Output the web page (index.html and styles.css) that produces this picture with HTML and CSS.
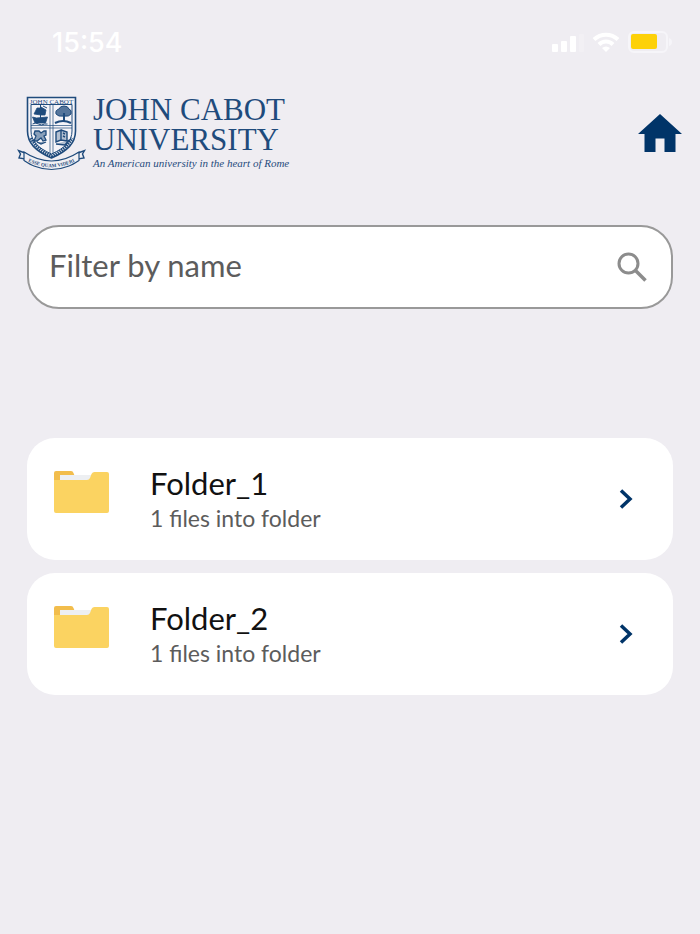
FILE: index.html
```html
<!DOCTYPE html>
<html lang="en">
<head>
  <meta charset="UTF-8">
  <title>Folders - John Cabot University</title>
  <meta name="viewport" content="width=device-width, initial-scale=1.0">
  <link rel="stylesheet" href="styles.css">
</head>
<body>
  <div class="status-bar">
    <span class="clock">15:54</span>
    <div class="status-icons">
      <svg width="32" height="20" viewBox="0 0 32 20" fill="#fff" aria-hidden="true">
        <rect x="0" y="12" width="6" height="8" rx="1"/>
        <rect x="9" y="9" width="6" height="11" rx="1"/>
        <rect x="18" y="4" width="6" height="16" rx="1"/>
        <rect x="27" y="2" width="5" height="18" rx="1" opacity="0.2"/>
      </svg>
      <svg width="28" height="20" viewBox="0 0 28 20" fill="none" stroke="#fff" stroke-width="4" aria-hidden="true">
        <path d="M2 7.5C9 1 19 1 26 7.5"/>
        <path d="M7 12.5C11 8.500 17 8.500 21 12.5"/>
        <path d="M14 20l-4-4c2.5-2 5.5-2 8 0z" fill="#fff" stroke="none"/>
      </svg>
      <svg width="44" height="22" viewBox="0 0 44 22" aria-hidden="true">
        <rect x="1" y="1" width="38" height="20" rx="5" fill="none" stroke="#f6f5f9" stroke-width="2"/>
        <rect x="3" y="3" width="26" height="15" rx="2" fill="#fdd108"/>
        <path d="M41 7q3 1 3 4t-3 4z" fill="#f6f5f9"/>
      </svg>
    </div>
  </div>

  <header class="header">
    <div class="logo">
      <svg class="crest" width="70" height="76" viewBox="0 0 70 76" fill="none" stroke="#1f4b7c" aria-hidden="true">
        <path d="M10.5 2.5h48V36c0 12-8 20-24 27C18.5 56 10.5 48 10.5 36z" fill="#f5f4f8" stroke-width="1.6"/>
        <path d="M14 9.5h41V36c0 10-7 17-20.5 23C21 53 14 46 14 36z"/>
        <text x="34.5" y="8.5" font-family="Liberation Serif, serif" font-size="7" text-anchor="middle" fill="#1f4b7c" stroke="none">JOHN CABOT</text>
        <path d="M33 10v48M36 10v48M14 30.5h41M14 33h41" stroke-width="0.7"/>
        <!-- ship -->
        <path d="M15.500 22l4 1 11-1-2 6H18zM17 19l3-6h4v7zM24 12l5 3-1 5h-4z" fill="#1f4b7c" stroke-width="0.800"/>
        <path d="M23.5 10v13M26 11l4 2M15.500 29q3-2 6 0t6 0h3" stroke-width="1"/>
        <!-- tree -->
        <path d="M39 19q-1-4 3-5 1-3 5-3t5 3q3 1 2 5-2 3-7 2-6 1-8-2z" fill="#1f4b7c" fill-opacity="0.75" stroke-width="1"/>
        <path d="M47 18v8" stroke-width="2"/>
        <path d="M38 28q8-4 16 0" stroke-width="2"/>
        <!-- lion and book -->
        <path d="M18 36h4l2 2 3-2h2v4l-2 1 2 4-3 1-2-3-4 3h-3l2-5-2-2zM20 47l4 2 5-2" fill="#1f4b7c" fill-opacity="0.500" stroke-width="1.300"/>
        <path d="M39 37l5-2v10l-5 2zM44 35l6 2v9l-6-1M46 38l2 1M46 41l2 1M39 49l9 1 4-5" fill="#1f4b7c" fill-opacity="0.300" stroke-width="1.400"/>
        <path d="M14 43Q20 55 34.5 61Q49 55 55 43" stroke-width="3" stroke-dasharray="1.500 0.800"/>
        <!-- ribbon -->
        <path d="M8 58L1.500 55.500l2 3.500-1.500 4 6 1zM61 58l6.500-2.500-2 3.500 1.500 4-6 1z" fill="#f0eff3" stroke-width="1.400"/>
        <path d="M7 57Q34.500 75 62 57V65.500Q55 70 52 71Q34.500 78 17 71Q14 70 7 65.500z" fill="#f0eff3" stroke-width="1.200"/>
        <path id="motto" d="M9 65.5Q34.5 79 60 65.5" stroke="none"/>
        <text font-family="Liberation Serif, serif" font-size="5" font-weight="bold" fill="#1f4b7c" stroke="none"><textPath href="#motto" startOffset="50%" text-anchor="middle">ESSE QUAM VIDERI</textPath></text>
      </svg>
      <div class="logo-text">
        <span class="logo-name">JOHN CABOT<br>UNIVERSITY</span>
        <span class="logo-tagline">An American university in the heart of Rome</span>
      </div>
    </div>
    <a class="home" href="#" aria-label="Home">
      <svg width="44" height="38" viewBox="0 0 44 38" fill="#003468" aria-hidden="true">
        <path d="M22 0L44 20H37.5V38H26.5V24.5H17.5V38H6.5V20H0z"/>
      </svg>
    </a>
  </header>

  <main class="content">
    <form class="search">
      <input class="search-input" type="text" placeholder="Filter by name" aria-label="Filter by name">
      <button class="search-button" type="button" aria-label="Search">
        <svg width="30" height="30" viewBox="0 0 30 30" fill="none" stroke="#8c8c8c" stroke-width="3" aria-hidden="true">
          <circle cx="11.5" cy="11.5" r="9.5"/>
          <path d="M18 18l10.5 10.5" stroke-width="3.5"/>
        </svg>
      </button>
    </form>

    <nav class="folders">
      <a class="folder" href="#">
        <svg class="folder-icon" width="56" height="44" viewBox="0 0 56 44" aria-hidden="true">
          <path d="M0 12V3q0-2 2-2h15q2 0 2.5 2l2 5V14H0z" fill="#f2bd4c"/>
          <path d="M6 5h32v8H6z" fill="#edeff2"/>
          <path d="M0 10h33q2 0 3-2l1.5-4q1-2 3-2H53q2 0 2 2V41q0 2-2 2H2q-2 0-2-2z" fill="#fbd361"/>
        </svg>
        <span class="folder-text">
          <span class="folder-name">Folder_1</span>
          <span class="folder-count">1 files into folder</span>
        </span>
        <svg width="14" height="20" viewBox="0 0 14 20" fill="none" stroke="#003468" stroke-width="3.5" aria-hidden="true">
          <path d="M2 1.5L11 10L2 18.5"/>
        </svg>
      </a>
      <a class="folder" href="#">
        <svg class="folder-icon" width="56" height="44" viewBox="0 0 56 44" aria-hidden="true">
          <path d="M0 12V3q0-2 2-2h15q2 0 2.5 2l2 5V14H0z" fill="#f2bd4c"/>
          <path d="M6 5h32v8H6z" fill="#edeff2"/>
          <path d="M0 10h33q2 0 3-2l1.5-4q1-2 3-2H53q2 0 2 2V41q0 2-2 2H2q-2 0-2-2z" fill="#fbd361"/>
        </svg>
        <span class="folder-text">
          <span class="folder-name">Folder_2</span>
          <span class="folder-count">1 files into folder</span>
        </span>
        <svg width="14" height="20" viewBox="0 0 14 20" fill="none" stroke="#003468" stroke-width="3.5" aria-hidden="true">
          <path d="M2 1.5L11 10L2 18.5"/>
        </svg>
      </a>
    </nav>
  </main>
</body>
</html>
```
FILE: styles.css
```css
* {
  box-sizing: border-box;
}

body {
  margin: 0;
  background: #efedf2;
  color: #111;
  font-family: Lato, sans-serif;
}

.status-bar {
  display: flex;
  justify-content: space-between;
  align-items: center;
  height: 84px;
  padding: 0 28px 0 52px;
}

.clock {
  color: #fff;
  font-family: Inter, sans-serif;
  font-size: 27px;
  font-weight: 500;
}

.status-icons {
  display: flex;
  align-items: center;
  gap: 8px;
}

.header {
  display: flex;
  justify-content: space-between;
  align-items: center;
  padding: 11px 18px 0 17px;
}

.logo {
  display: flex;
  gap: 6px;
  color: #1f4b7c;
  font-family: "Liberation Serif", serif;
}

.logo-text {
  display: flex;
  flex-direction: column;
}

.logo-name {
  font-size: 31px;
  line-height: 30px;
}

.logo-tagline {
  font-size: 11px;
  line-height: 16px;
  font-style: italic;
}

.home svg {
  display: block;
}

.content {
  padding: 54px 27px 24px;
}

.search {
  display: flex;
  align-items: center;
  height: 84px;
  padding: 0 24px 0 20px;
  background: #fff;
  border: 2px solid #999;
  border-radius: 32px;
}

.search-input {
  flex: 1;
  min-width: 0;
  padding: 0 0 4px;
  border: 0;
  outline: 0;
  background: none;
  color: #111;
  font-family: inherit;
  font-size: 31px;
}

.search-input::placeholder {
  color: #5c5c5c;
}

.search-button {
  padding: 0;
  border: 0;
  background: none;
}

.search-button svg {
  display: block;
}

.folders {
  display: flex;
  flex-direction: column;
  gap: 13px;
  margin-top: 129px;
}

.folder {
  display: flex;
  align-items: center;
  padding: 26px 40px 26px 27px;
  background: #fff;
  border-radius: 28px;
  color: #111;
  text-decoration: none;
}

.folder-icon {
  align-self: flex-start;
  margin: 6px 40px 0 0;
}

.folder-text {
  display: flex;
  flex: 1;
  flex-direction: column;
}

.folder-name {
  font-size: 31px;
  line-height: 38px;
}

.folder-count {
  color: #5c5c5c;
  font-size: 23px;
  line-height: 32px;
}
```
